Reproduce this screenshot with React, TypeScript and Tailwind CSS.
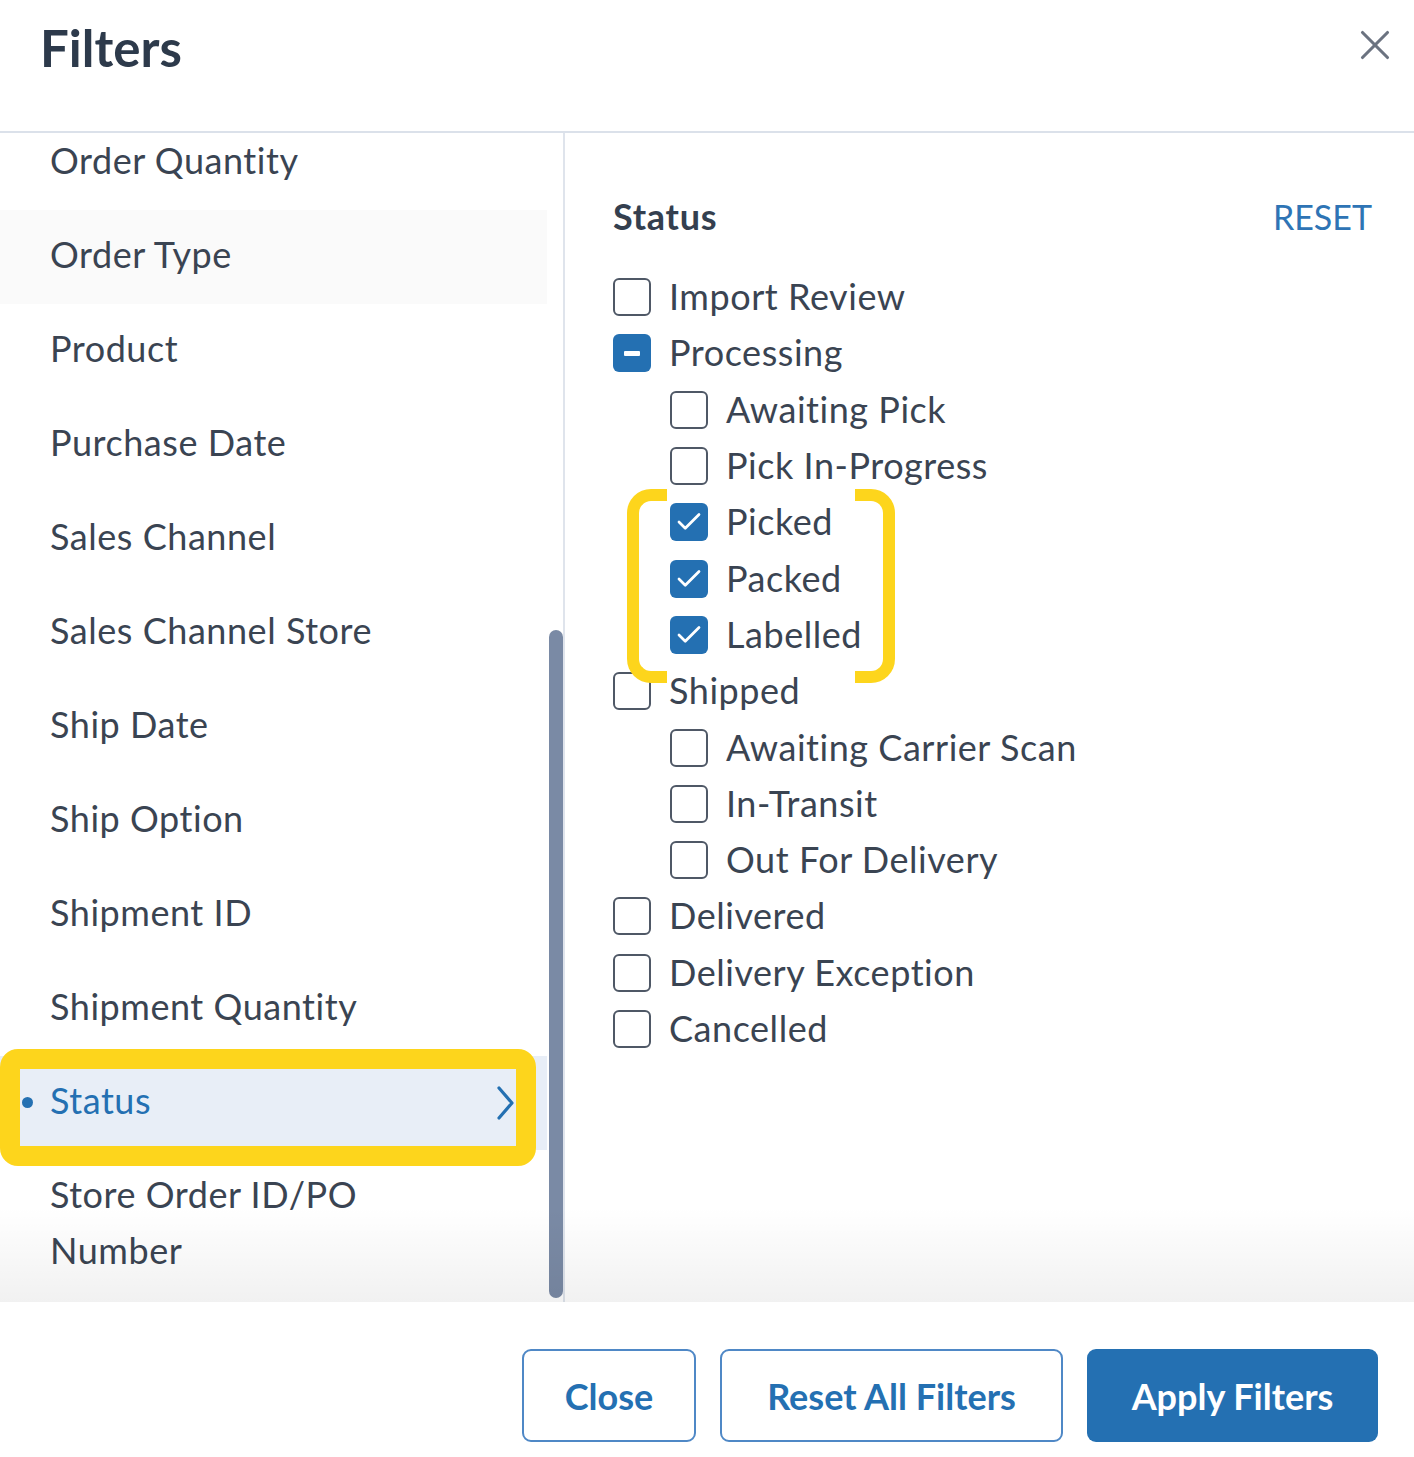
import { X, Check } from "lucide-react";

type Opt = { label: string; level: 0 | 1; state?: "checked" | "mixed" };

const FIELDS = [
  "Order Quantity",
  "Order Type",
  "Product",
  "Purchase Date",
  "Sales Channel",
  "Sales Channel Store",
  "Ship Date",
  "Ship Option",
  "Shipment ID",
  "Shipment Quantity",
];

const OPTIONS: Opt[] = [
  { label: "Import Review", level: 0 },
  { label: "Processing", level: 0, state: "mixed" },
  { label: "Awaiting Pick", level: 1 },
  { label: "Pick In-Progress", level: 1 },
  { label: "Picked", level: 1, state: "checked" },
  { label: "Packed", level: 1, state: "checked" },
  { label: "Labelled", level: 1, state: "checked" },
  { label: "Shipped", level: 0 },
  { label: "Awaiting Carrier Scan", level: 1 },
  { label: "In-Transit", level: 1 },
  { label: "Out For Delivery", level: 1 },
  { label: "Delivered", level: 0 },
  { label: "Delivery Exception", level: 0 },
  { label: "Cancelled", level: 0 },
];

function Box({ state }: { state?: "checked" | "mixed" }) {
  if (state === "checked") {
    return (
      <span className="flex h-[38px] w-[38px] shrink-0 items-center justify-center rounded-[6px] bg-[#2470b2]">
        <Check size={30} strokeWidth={2.2} className="text-white" />
      </span>
    );
  }
  if (state === "mixed") {
    return (
      <span className="flex h-[38px] w-[38px] shrink-0 items-center justify-center rounded-[6px] bg-[#2470b2]">
        <span className="h-[5px] w-[16px] rounded-[1px] bg-white" />
      </span>
    );
  }
  return <span className="h-[38px] w-[38px] shrink-0 rounded-[6px] border-2 border-[#4f5866] bg-white" />;
}

export default function App() {
  return (
    <div className="relative flex h-[1457px] w-[1414px] flex-col overflow-hidden bg-white font-['Lato',sans-serif] text-[#3a4452]">
      {/* header */}
      <div className="flex h-[133px] shrink-0 items-start justify-between border-b-2 border-[#dbe1ea] pl-[40px] pr-[14px]">
        <h1 className="mt-[16px] text-[51px] font-bold leading-[64px] text-[#2d3a4b]">Filters</h1>
        <button className="mt-[20px] flex h-[50px] w-[50px] items-center justify-center text-[#6b7380]">
          <X size={52} strokeWidth={1.5} />
        </button>
      </div>

      {/* body */}
      <div className="relative flex min-h-0 flex-1">
        <div className="relative w-[565px] shrink-0 overflow-hidden border-r-2 border-[#dfe4ec]">
          <ul className="-mt-[17px] w-[547px]">
            {FIELDS.map((f) => (
              <li
                key={f}
                className={`flex h-[94px] items-center pb-[6px] pl-[50px] text-[36px] tracking-[0.015em] ${f === "Order Type" ? "bg-[#fafafa]" : ""}`}
              >
                {f}
              </li>
            ))}
            <li className="relative flex h-[94px] items-center justify-between bg-[#e8eef7] pb-[6px] pl-[50px] pr-[32px] text-[36px] tracking-[0.015em] text-[#2470b2]">
              <span className="absolute left-[22px] top-[41px] h-[11px] w-[11px] rounded-full bg-[#2470b2]" />
              <span>Status</span>
              <svg width="18" height="34" viewBox="0 0 18 34" fill="none" className="mt-[6px]">
                <polyline points="2,2 15,17 2,32" stroke="#2470b2" strokeWidth="3.2" strokeLinecap="round" strokeLinejoin="round" />
              </svg>
            </li>
            <li className="pl-[50px] pt-[16px] text-[36px] leading-[56px] tracking-[0.015em]">
              Store Order ID/PO
              <br />
              Number
            </li>
          </ul>

          {/* scrollbar thumb */}
          <div className="absolute bottom-[4px] right-0 top-[497px] w-[14px] rounded-full bg-[#7a8aa5]" />

          {/* highlight annotation */}
          <div className="absolute left-0 top-[916px] h-[117px] w-[536px] rounded-[18px] border-[20px] border-[#fdd51c]" />
        </div>

        <div className="flex-1 pl-[48px] pr-[42px] pt-[63px]">
          <div className="flex h-[40px] items-center justify-between">
            <h2 className="text-[36px] font-bold tracking-[0.02em] text-[#343f4f]">Status</h2>
            <button className="text-[34px] text-[#2e74b5]">RESET</button>
          </div>
          <div className="relative mt-[33px]">
            {OPTIONS.map((o) => (
              <label
                key={o.label}
                className={`flex h-[56.3px] items-center gap-[18px] text-[36px] tracking-[0.015em] ${o.level === 1 ? "pl-[57px]" : ""}`}
              >
                <Box state={o.state} />
                <span className="pb-[2px]">{o.label}</span>
              </label>
            ))}

            {/* bracket annotation */}
            <div className="absolute left-[14px] top-[220px] h-[194px] w-[40px] rounded-l-[24px] border-y-[12px] border-l-[12px] border-[#fdd51c]" />
            <div className="absolute left-[242px] top-[220px] h-[194px] w-[40px] rounded-r-[24px] border-y-[12px] border-r-[12px] border-[#fdd51c]" />
          </div>
        </div>

        {/* bottom fade */}
        <div className="pointer-events-none absolute inset-x-0 bottom-0 h-[95px] bg-gradient-to-b from-black/0 to-black/[0.055]" />
      </div>

      {/* footer */}
      <div className="flex h-[155px] shrink-0 items-start justify-end gap-[24px] pr-[36px] pt-[47px]">
        <button className="h-[93px] w-[174px] rounded-[9px] border-2 border-[#4f88c6] text-[36px] font-bold text-[#2470b2]">
          Close
        </button>
        <button className="h-[93px] w-[343px] rounded-[9px] border-2 border-[#4f88c6] text-[36px] font-bold text-[#2470b2]">
          Reset All Filters
        </button>
        <button className="h-[93px] w-[291px] rounded-[9px] bg-[#2470b2] text-[36px] font-bold text-white">
          Apply Filters
        </button>
      </div>
    </div>
  );
}
